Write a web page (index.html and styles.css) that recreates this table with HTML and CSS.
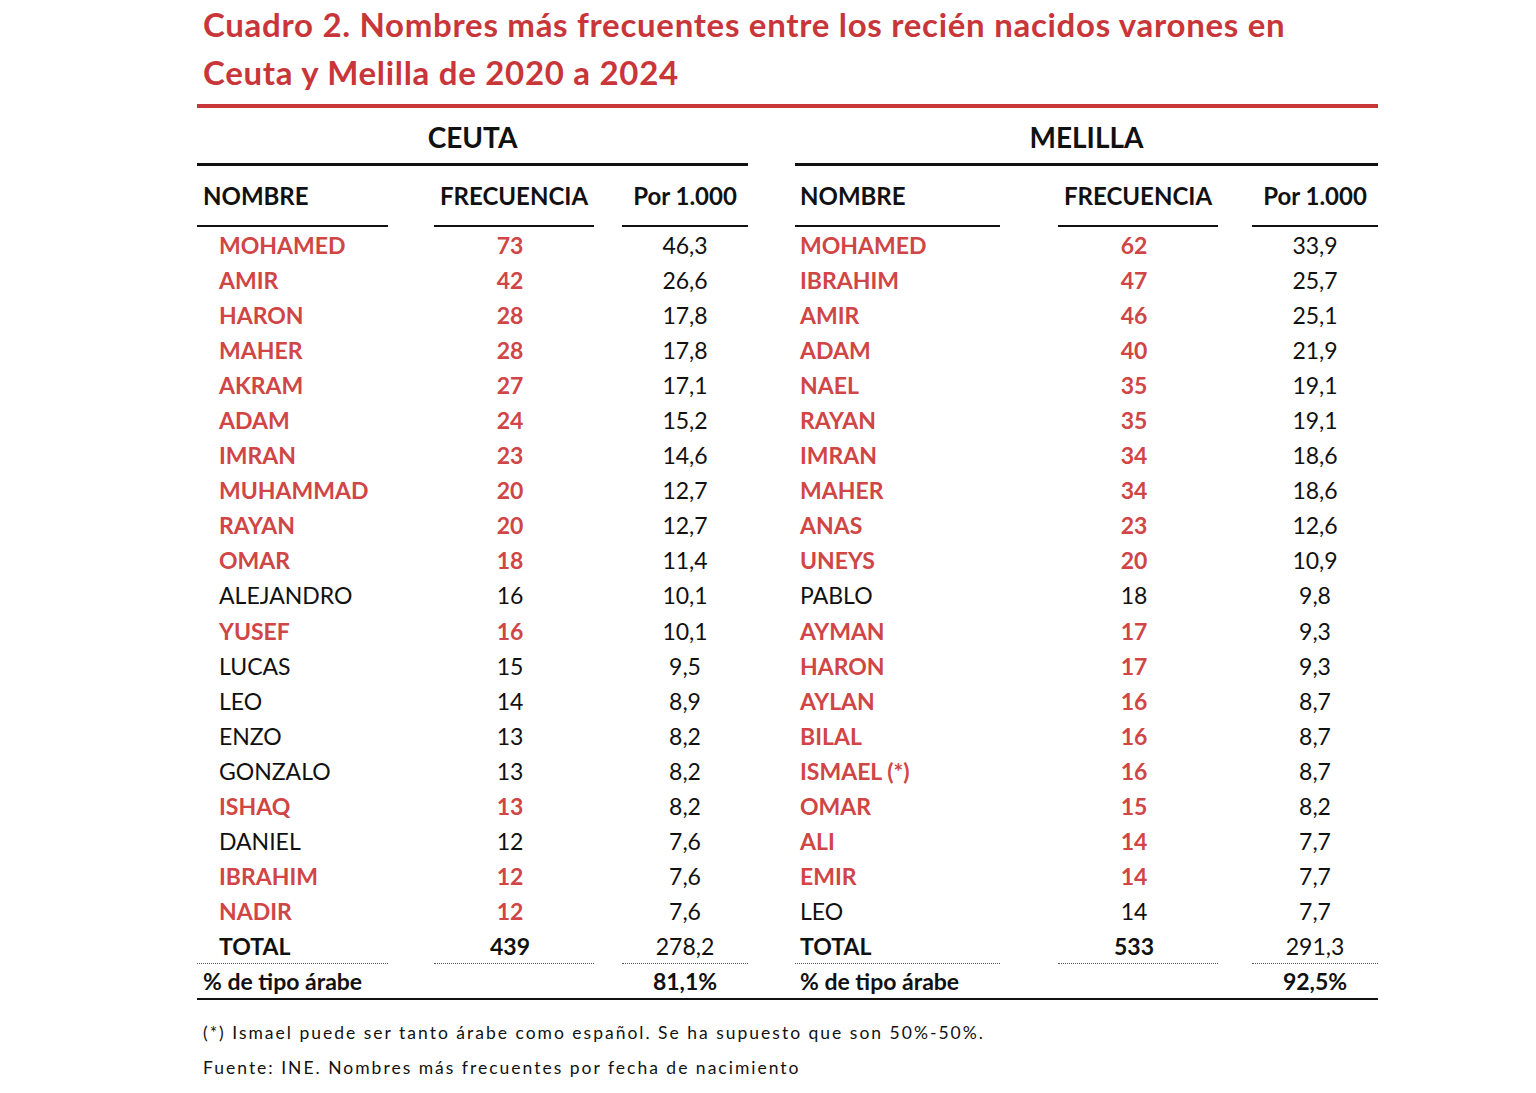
FILE: index.html
```html
<!DOCTYPE html>
<html lang="es">
<head>
    <meta charset="UTF-8">
    <title>Cuadro 2. Nombres más frecuentes</title>
    <link rel="stylesheet" href="styles.css">
</head>
<body>
    <div class="page">
        <h1 class="title">Cuadro 2. Nombres más frecuentes entre los recién nacidos varones en<br>Ceuta y Melilla de 2020 a 2024</h1>
        <div class="title-rule"></div>

        <div class="tables">
            <!-- Ceuta -->
            <div class="block ceuta">
                <div class="block-title">CEUTA</div>
                <div class="row head">
                    <div class="c-name">NOMBRE</div>
                    <div class="c-freq">FRECUENCIA</div>
                    <div class="c-rate">Por 1.000</div>
                </div>
                <div class="row ar"><div class="c-name">MOHAMED</div><div class="c-freq">73</div><div class="c-rate">46,3</div></div>
                <div class="row ar"><div class="c-name">AMIR</div><div class="c-freq">42</div><div class="c-rate">26,6</div></div>
                <div class="row ar"><div class="c-name">HARON</div><div class="c-freq">28</div><div class="c-rate">17,8</div></div>
                <div class="row ar"><div class="c-name">MAHER</div><div class="c-freq">28</div><div class="c-rate">17,8</div></div>
                <div class="row ar"><div class="c-name">AKRAM</div><div class="c-freq">27</div><div class="c-rate">17,1</div></div>
                <div class="row ar"><div class="c-name">ADAM</div><div class="c-freq">24</div><div class="c-rate">15,2</div></div>
                <div class="row ar"><div class="c-name">IMRAN</div><div class="c-freq">23</div><div class="c-rate">14,6</div></div>
                <div class="row ar"><div class="c-name">MUHAMMAD</div><div class="c-freq">20</div><div class="c-rate">12,7</div></div>
                <div class="row ar"><div class="c-name">RAYAN</div><div class="c-freq">20</div><div class="c-rate">12,7</div></div>
                <div class="row ar"><div class="c-name">OMAR</div><div class="c-freq">18</div><div class="c-rate">11,4</div></div>
                <div class="row"><div class="c-name">ALEJANDRO</div><div class="c-freq">16</div><div class="c-rate">10,1</div></div>
                <div class="row ar"><div class="c-name">YUSEF</div><div class="c-freq">16</div><div class="c-rate">10,1</div></div>
                <div class="row"><div class="c-name">LUCAS</div><div class="c-freq">15</div><div class="c-rate">9,5</div></div>
                <div class="row"><div class="c-name">LEO</div><div class="c-freq">14</div><div class="c-rate">8,9</div></div>
                <div class="row"><div class="c-name">ENZO</div><div class="c-freq">13</div><div class="c-rate">8,2</div></div>
                <div class="row"><div class="c-name">GONZALO</div><div class="c-freq">13</div><div class="c-rate">8,2</div></div>
                <div class="row ar"><div class="c-name">ISHAQ</div><div class="c-freq">13</div><div class="c-rate">8,2</div></div>
                <div class="row"><div class="c-name">DANIEL</div><div class="c-freq">12</div><div class="c-rate">7,6</div></div>
                <div class="row ar"><div class="c-name">IBRAHIM</div><div class="c-freq">12</div><div class="c-rate">7,6</div></div>
                <div class="row ar"><div class="c-name">NADIR</div><div class="c-freq">12</div><div class="c-rate">7,6</div></div>
                <div class="row total"><div class="c-name">TOTAL</div><div class="c-freq">439</div><div class="c-rate">278,2</div></div>
                <div class="row share"><div class="c-name">% de tipo árabe</div><div class="c-freq"></div><div class="c-rate">81,1%</div></div>
            </div>

            <!-- Melilla -->
            <div class="block melilla">
                <div class="block-title">MELILLA</div>
                <div class="row head">
                    <div class="c-name">NOMBRE</div>
                    <div class="c-freq">FRECUENCIA</div>
                    <div class="c-rate">Por 1.000</div>
                </div>
                <div class="row ar"><div class="c-name">MOHAMED</div><div class="c-freq">62</div><div class="c-rate">33,9</div></div>
                <div class="row ar"><div class="c-name">IBRAHIM</div><div class="c-freq">47</div><div class="c-rate">25,7</div></div>
                <div class="row ar"><div class="c-name">AMIR</div><div class="c-freq">46</div><div class="c-rate">25,1</div></div>
                <div class="row ar"><div class="c-name">ADAM</div><div class="c-freq">40</div><div class="c-rate">21,9</div></div>
                <div class="row ar"><div class="c-name">NAEL</div><div class="c-freq">35</div><div class="c-rate">19,1</div></div>
                <div class="row ar"><div class="c-name">RAYAN</div><div class="c-freq">35</div><div class="c-rate">19,1</div></div>
                <div class="row ar"><div class="c-name">IMRAN</div><div class="c-freq">34</div><div class="c-rate">18,6</div></div>
                <div class="row ar"><div class="c-name">MAHER</div><div class="c-freq">34</div><div class="c-rate">18,6</div></div>
                <div class="row ar"><div class="c-name">ANAS</div><div class="c-freq">23</div><div class="c-rate">12,6</div></div>
                <div class="row ar"><div class="c-name">UNEYS</div><div class="c-freq">20</div><div class="c-rate">10,9</div></div>
                <div class="row"><div class="c-name">PABLO</div><div class="c-freq">18</div><div class="c-rate">9,8</div></div>
                <div class="row ar"><div class="c-name">AYMAN</div><div class="c-freq">17</div><div class="c-rate">9,3</div></div>
                <div class="row ar"><div class="c-name">HARON</div><div class="c-freq">17</div><div class="c-rate">9,3</div></div>
                <div class="row ar"><div class="c-name">AYLAN</div><div class="c-freq">16</div><div class="c-rate">8,7</div></div>
                <div class="row ar"><div class="c-name">BILAL</div><div class="c-freq">16</div><div class="c-rate">8,7</div></div>
                <div class="row ar"><div class="c-name">ISMAEL (*)</div><div class="c-freq">16</div><div class="c-rate">8,7</div></div>
                <div class="row ar"><div class="c-name">OMAR</div><div class="c-freq">15</div><div class="c-rate">8,2</div></div>
                <div class="row ar"><div class="c-name">ALI</div><div class="c-freq">14</div><div class="c-rate">7,7</div></div>
                <div class="row ar"><div class="c-name">EMIR</div><div class="c-freq">14</div><div class="c-rate">7,7</div></div>
                <div class="row"><div class="c-name">LEO</div><div class="c-freq">14</div><div class="c-rate">7,7</div></div>
                <div class="row total"><div class="c-name">TOTAL</div><div class="c-freq">533</div><div class="c-rate">291,3</div></div>
                <div class="row share"><div class="c-name">% de tipo árabe</div><div class="c-freq"></div><div class="c-rate">92,5%</div></div>
            </div>
        </div>

        <div class="notes">
            <p>(*) Ismael puede ser tanto árabe como español. Se ha supuesto que son 50%-50%.</p>
            <p>Fuente: INE. Nombres más frecuentes por fecha de nacimiento</p>
        </div>
    </div>
</body>
</html>
```

FILE: styles.css
```css
* {
    margin: 0;
    padding: 0;
    box-sizing: border-box;
}

body {
    background-color: #ffffff;
    color: #111111;
    font-family: Lato, "Liberation Sans", sans-serif;
}

.page {
    width: 1181px;
    margin-left: 197px;
}

/* Título */
.title {
    padding-left: 6px;
    font-size: 33px;
    line-height: 48px;
    font-weight: 700;
    letter-spacing: 0.7px;
    color: #c8363a;
}

.title-rule {
    height: 4px;
    margin-top: 8px;
    background-color: #c8363a;
}

/* Tablas */
.tables {
    display: flex;
    gap: 47px;
    border-bottom: 2px solid #111111;
}

.block {
    display: flex;
    flex-direction: column;
}

.ceuta {
    width: 551px;
}

.melilla {
    width: 583px;
}

.block-title {
    height: 58px;
    display: flex;
    align-items: center;
    justify-content: center;
    padding-top: 3px;
    font-size: 28px;
    font-weight: 700;
    border-bottom: 3px solid #111111;
}

.row {
    display: flex;
    height: 35.1px;
    align-items: center;
    font-size: 23px;
}

.c-name {
    width: 191px;
    padding-left: 22px;
}

.c-freq {
    width: 160px;
    margin-left: 46px;
    padding-right: 8px;
    text-align: center;
}

.c-rate {
    width: 126px;
    margin-left: 28px;
    text-align: center;
}

.melilla .c-name {
    width: 205px;
    padding-left: 5px;
}

.melilla .c-freq {
    margin-left: 58px;
}

.melilla .c-rate {
    margin-left: 34px;
}

.row.head {
    height: 61px;
    font-size: 24px;
    font-weight: 700;
}

.row.head > div {
    height: 100%;
    display: flex;
    align-items: center;
    justify-content: center;
    border-bottom: 2px solid #111111;
}

.row.head .c-freq {
    padding-right: 0;
}

.row.head .c-name {
    justify-content: flex-start;
    padding-left: 6px;
}

.melilla .row.head .c-name {
    padding-left: 5px;
}

.row.ar .c-name,
.row.ar .c-freq {
    color: #d04545;
    font-weight: 700;
}

.row.total {
    font-weight: 700;
}

.row.total > div {
    height: 100%;
    display: flex;
    align-items: center;
    justify-content: center;
    border-bottom: 1px dotted #555555;
}

.row.total .c-name {
    justify-content: flex-start;
}

.row.total .c-rate {
    font-weight: 400;
}

.row.share {
    height: 34px;
    font-weight: 700;
}

.row.share .c-name {
    width: auto;
    flex: 0 0 191px;
    padding-left: 6px;
    white-space: nowrap;
}

.melilla .row.share .c-name {
    flex-basis: 205px;
    padding-left: 5px;
}

/* Notas */
.notes {
    padding-left: 6px;
    padding-top: 15px;
    font-size: 17.5px;
    letter-spacing: 2px;
    color: #111111;
}

.notes p {
    line-height: 35px;
}
```
